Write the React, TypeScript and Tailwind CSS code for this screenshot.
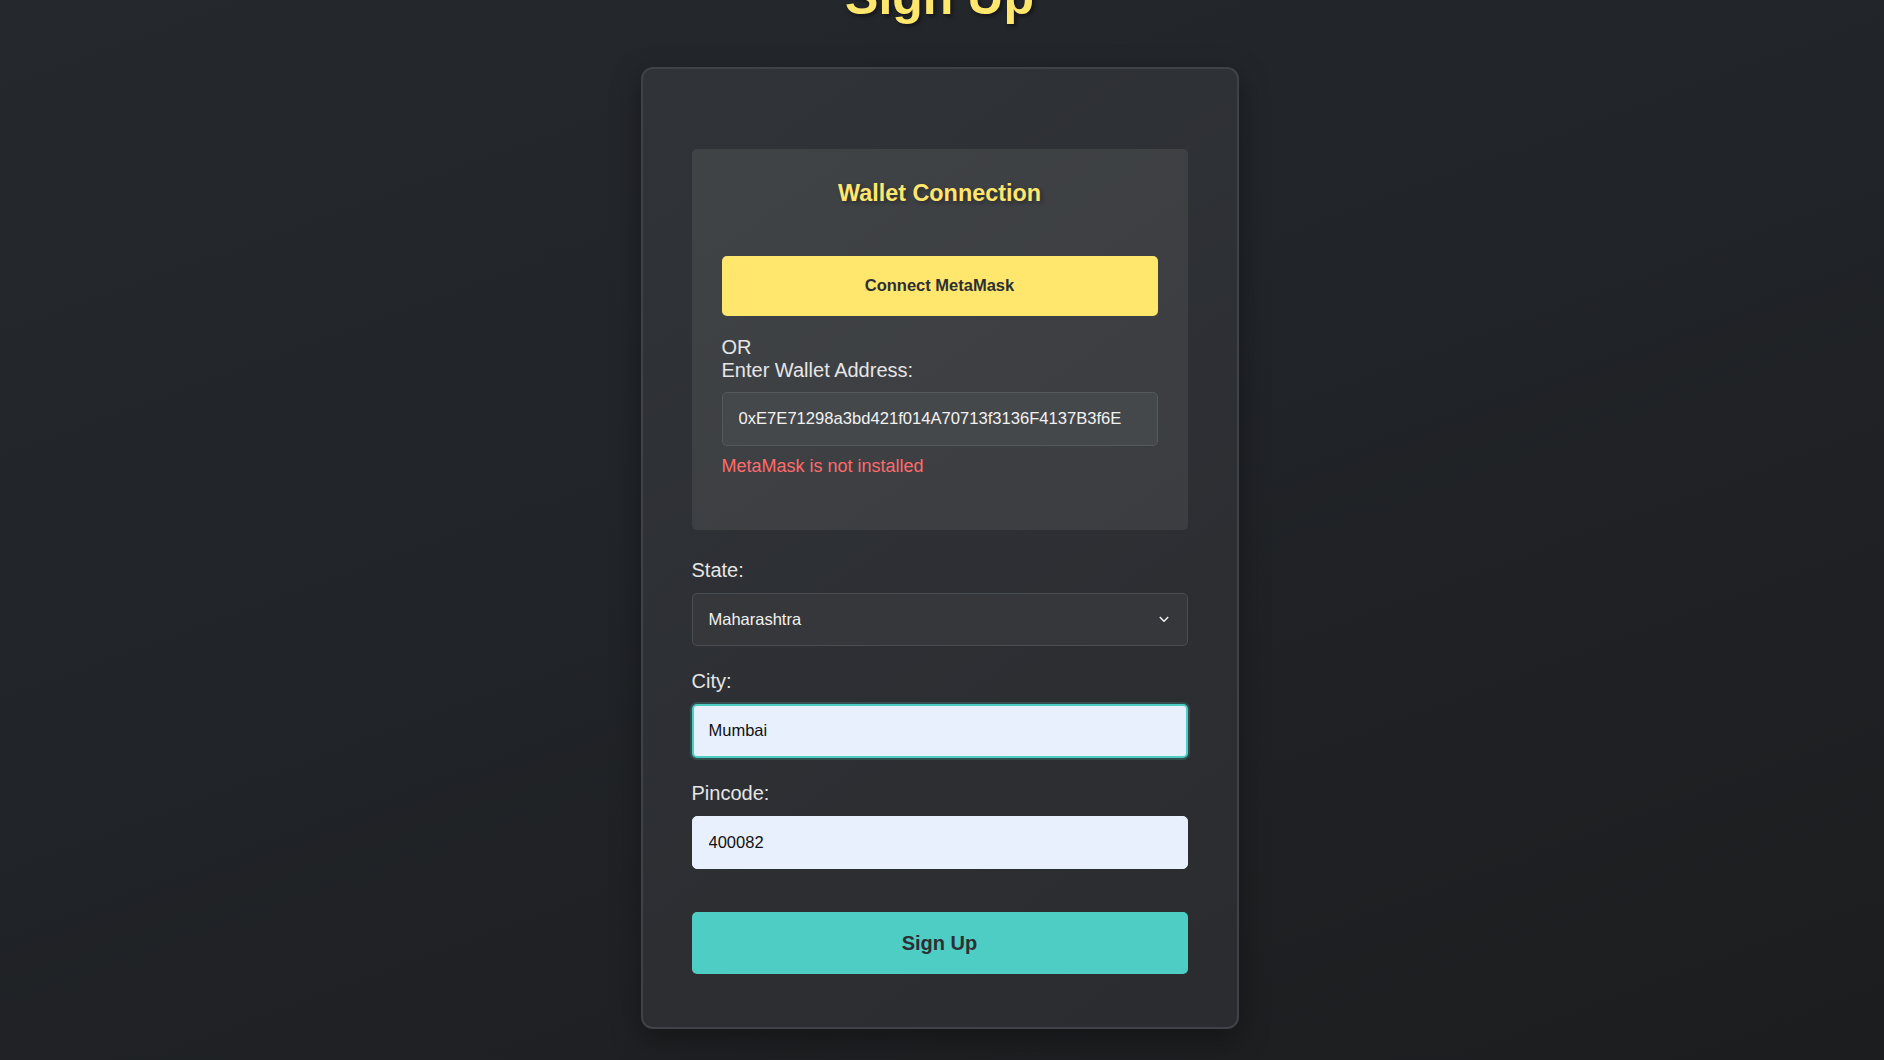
import { useState } from "react";

const font = "font-['Liberation_Sans',Arial,sans-serif]";

function Field({
  label,
  children,
  className = "",
}: {
  label: string;
  children: React.ReactNode;
  className?: string;
}) {
  return (
    <div className={className}>
      <label className="mb-[11px] block text-[20px] leading-[23px] text-[#e6e6e6]">{label}</label>
      {children}
    </div>
  );
}

export default function App() {
  const [walletAddress, setWalletAddress] = useState("0xE7E71298a3bd421f014A70713f3136F4137B3f6E");
  const [state, setState] = useState("Maharashtra");
  const [city, setCity] = useState("Mumbai");
  const [pincode, setPincode] = useState("400082");

  return (
    <div
      className={`${font} flex min-h-screen flex-col items-center overflow-hidden bg-[linear-gradient(160deg,#25282d_0%,#212428_45%,#1c1d1f_100%)] pr-[5px]`}
    >
      <h1 className="-mt-[31px] mb-[40px] text-[50px] font-bold leading-[1.15] text-[#ffe66d] [text-shadow:2px_2px_4px_rgba(0,0,0,0.5)]">
        Sign Up
      </h1>

      <div className="w-[598px] rounded-[12px] border-2 border-[#3f4246] bg-[linear-gradient(145deg,#303338_0%,#2a2c2f_100%)] px-[49px] pt-[80px] pb-[53px] shadow-[0_10px_30px_rgba(0,0,0,0.35)]">
        <div className="rounded-[5px] bg-[linear-gradient(145deg,#404346_0%,#3b3d40_100%)] px-[30px] pt-[31px] pb-[53px]">
          <h3 className="text-center text-[23.4px] font-bold leading-[27px] text-[#ffe66d] [text-shadow:2px_2px_4px_rgba(0,0,0,0.35)]">
            Wallet Connection
          </h3>

          <button
            type="button"
            className="mt-[49px] flex h-[60px] w-full items-center justify-center rounded-[5px] bg-[#ffe66d] text-[16.5px] font-bold text-[#2c2f33]"
          >
            Connect MetaMask
          </button>

          <div className="mt-[20px] text-[20px] leading-[23px] text-[#e6e6e6]">
            OR
            <br />
            Enter Wallet Address:
          </div>

          <input
            value={walletAddress}
            onChange={(event) => setWalletAddress(event.target.value)}
            className="mt-[10px] h-[54px] w-full rounded-[5px] border border-[#55585c] bg-[#45484b] px-[16px] text-[16.6px] text-[#f2f2f2] outline-none"
          />

          <p className="mt-[10px] text-[18px] leading-[21px] text-[#ff6b6b]">MetaMask is not installed</p>
        </div>

        <Field label="State:" className="mt-[29px]">
          <div className="relative">
            <select
              value={state}
              onChange={(event) => setState(event.target.value)}
              className="h-[53px] w-full appearance-none rounded-[5px] border border-[#4a4d51] bg-[#35373a] px-[16px] text-[16.5px] text-[#f2f2f2] outline-none"
            >
              <option>Maharashtra</option>
              <option>Karnataka</option>
              <option>Gujarat</option>
            </select>
            <svg
              viewBox="0 0 12 8"
              className="pointer-events-none absolute right-[19px] top-[23px] h-[7px] w-[10px]"
              fill="none"
              stroke="#f2f2f2"
              strokeWidth="1.8"
              strokeLinecap="round"
              strokeLinejoin="round"
            >
              <polyline points="1.5,1.5 6,6 10.5,1.5" />
            </svg>
          </div>
        </Field>

        <Field label="City:" className="mt-[24px]">
          <input
            value={city}
            onChange={(event) => setCity(event.target.value)}
            className="h-[54px] w-full rounded-[5px] border-2 border-[#4ecdc4] bg-[#e8f0fe] px-[15px] text-[16.5px] text-[#111] shadow-[0_0_0_2px_rgba(78,205,196,0.2)] outline-none"
          />
        </Field>

        <Field label="Pincode:" className="mt-[24px]">
          <input
            value={pincode}
            onChange={(event) => setPincode(event.target.value)}
            className="h-[53px] w-full rounded-[5px] border border-[#e8f0fe] bg-[#e8f0fe] px-[16px] text-[16.5px] text-[#111] outline-none"
          />
        </Field>

        <button
          type="submit"
          className="mt-[43px] flex h-[62px] w-full items-center justify-center rounded-[5px] bg-[#4ecdc4] text-[20px] font-bold text-[#2c2f33]"
        >
          Sign Up
        </button>
      </div>
    </div>
  );
}
